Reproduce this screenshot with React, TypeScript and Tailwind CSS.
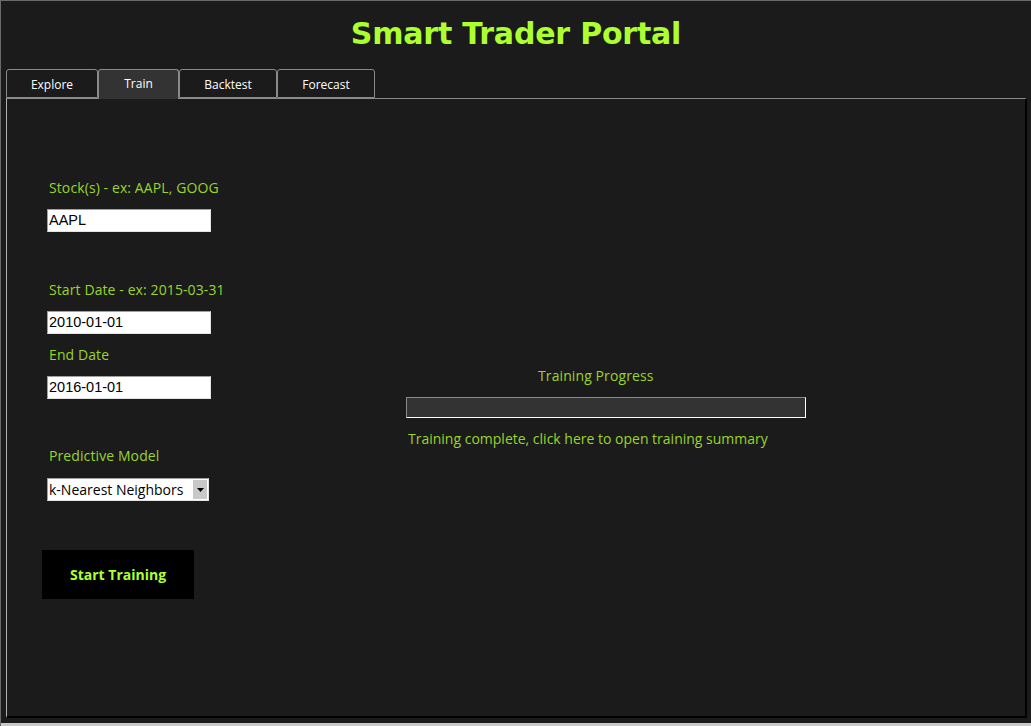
const tabs = ["Explore", "Train", "Backtest", "Forecast"];

const Field = ({ label, value }: { label: string; value: string }) => (
  <div className="flex flex-col">
    <span className="ml-[2px] text-[14px] leading-[18px] tracking-[0.1px] text-[#9ad42a]">{label}</span>
    <div className="mt-[12px] flex h-[23px] w-[164px] items-center border border-t-[#a0a0a0] border-l-[#a0a0a0] border-r-[#e3e3e3] border-b-[#e3e3e3] bg-white pl-[1px] font-['Liberation_Sans',sans-serif] text-[14.5px] text-black">
      {value}
    </div>
  </div>
);

export default function App() {
  return (
    <div className="flex h-[726px] w-[1031px] flex-col overflow-hidden border-t border-l border-[#6a6a6a] bg-[#1b1b1b] font-['Open_Sans',sans-serif]">
      <div className="flex flex-1 flex-col">
        {/* Title */}
        <h1 className="mt-[13px] h-[40px] text-center font-['DejaVu_Sans',sans-serif] text-[30px] font-bold leading-[40px] tracking-[-0.2px] text-[#adff2f]">
          Smart Trader Portal
        </h1>

        {/* Tabs */}
        <div className="ml-[5px] mt-[15px] flex h-[29px] items-end">
          {tabs.map((t) => {
            const active = t === "Train";
            return (
              <div
                key={t}
                className={
                  active
                    ? "z-10 -mb-px flex h-[30px] w-[81px] items-center justify-center rounded-t-[3px] border border-b-0 border-[#8a8a8a] bg-[#333333] pb-[2px] text-[12px] text-white"
                    : "flex h-[29px] w-[98px] items-center justify-center rounded-t-[3px] border border-[#8a8a8a] bg-[#1b1b1b] pt-[3px] text-[12px] text-white first:w-[92px]"
                }
              >
                {t}
              </div>
            );
          })}
        </div>

        {/* Tab pane */}
        <div className="mb-[5px] ml-[5px] mr-[4px] flex flex-1 border-t border-l border-r-2 border-b-2 border-t-[#8a8a8a] border-l-[#b0b0b0] border-r-black border-b-black">
          <div className="flex w-[359px] flex-col pl-[40px] pt-[80px]">
            <Field label="Stock(s) - ex: AAPL, GOOG" value="AAPL" />
            <div className="mt-[49px]">
              <Field label="Start Date - ex: 2015-03-31" value="2010-01-01" />
            </div>
            <div className="mt-[12px]">
              <Field label="End Date" value="2016-01-01" />
            </div>
            <div className="mt-[48px] flex flex-col">
              <span className="ml-[2px] text-[14px] leading-[18px] tracking-[0.1px] text-[#9ad42a]">Predictive Model</span>
              <div className="mt-[13px] flex h-[23px] w-[162px] items-center border border-t-[#a0a0a0] border-l-[#a0a0a0] border-r-[#e3e3e3] border-b-[#e3e3e3] bg-white">
                <span className="flex-1 pl-[1px] text-[14px] text-black">k-Nearest Neighbors</span>
                <div className="mr-[1px] flex h-[19px] w-[14px] items-center justify-center bg-[#c8c8c8]">
                  <svg width="7" height="4" viewBox="0 0 7 4">
                    <path d="M0 0h7L3.5 4z" fill="#000" />
                  </svg>
                </div>
              </div>
            </div>
            <button className="-ml-[5px] mt-[49px] h-[49px] w-[152px] bg-black text-[14px] font-bold text-[#adff2f]">
              Start Training
            </button>
          </div>

          <div className="flex flex-col items-start pl-[40px] pt-[268px]">
            <span className="ml-[132px] text-[14px] leading-[18px] tracking-[0.1px] text-[#9ad42a]">Training Progress</span>
            <div className="mt-[12px] h-[21px] w-[400px] border border-t-[#8a8a8a] border-l-[#8a8a8a] border-r-white border-b-white bg-[#333333]" />
            <span className="ml-[2px] mt-[12px] text-[14px] leading-[18px] text-[#9ad42a]">
              Training complete, click here to open training summary
            </span>
          </div>
        </div>
      </div>
      <div className="h-[3px] bg-[#c8c8c8]" />
    </div>
  );
}
